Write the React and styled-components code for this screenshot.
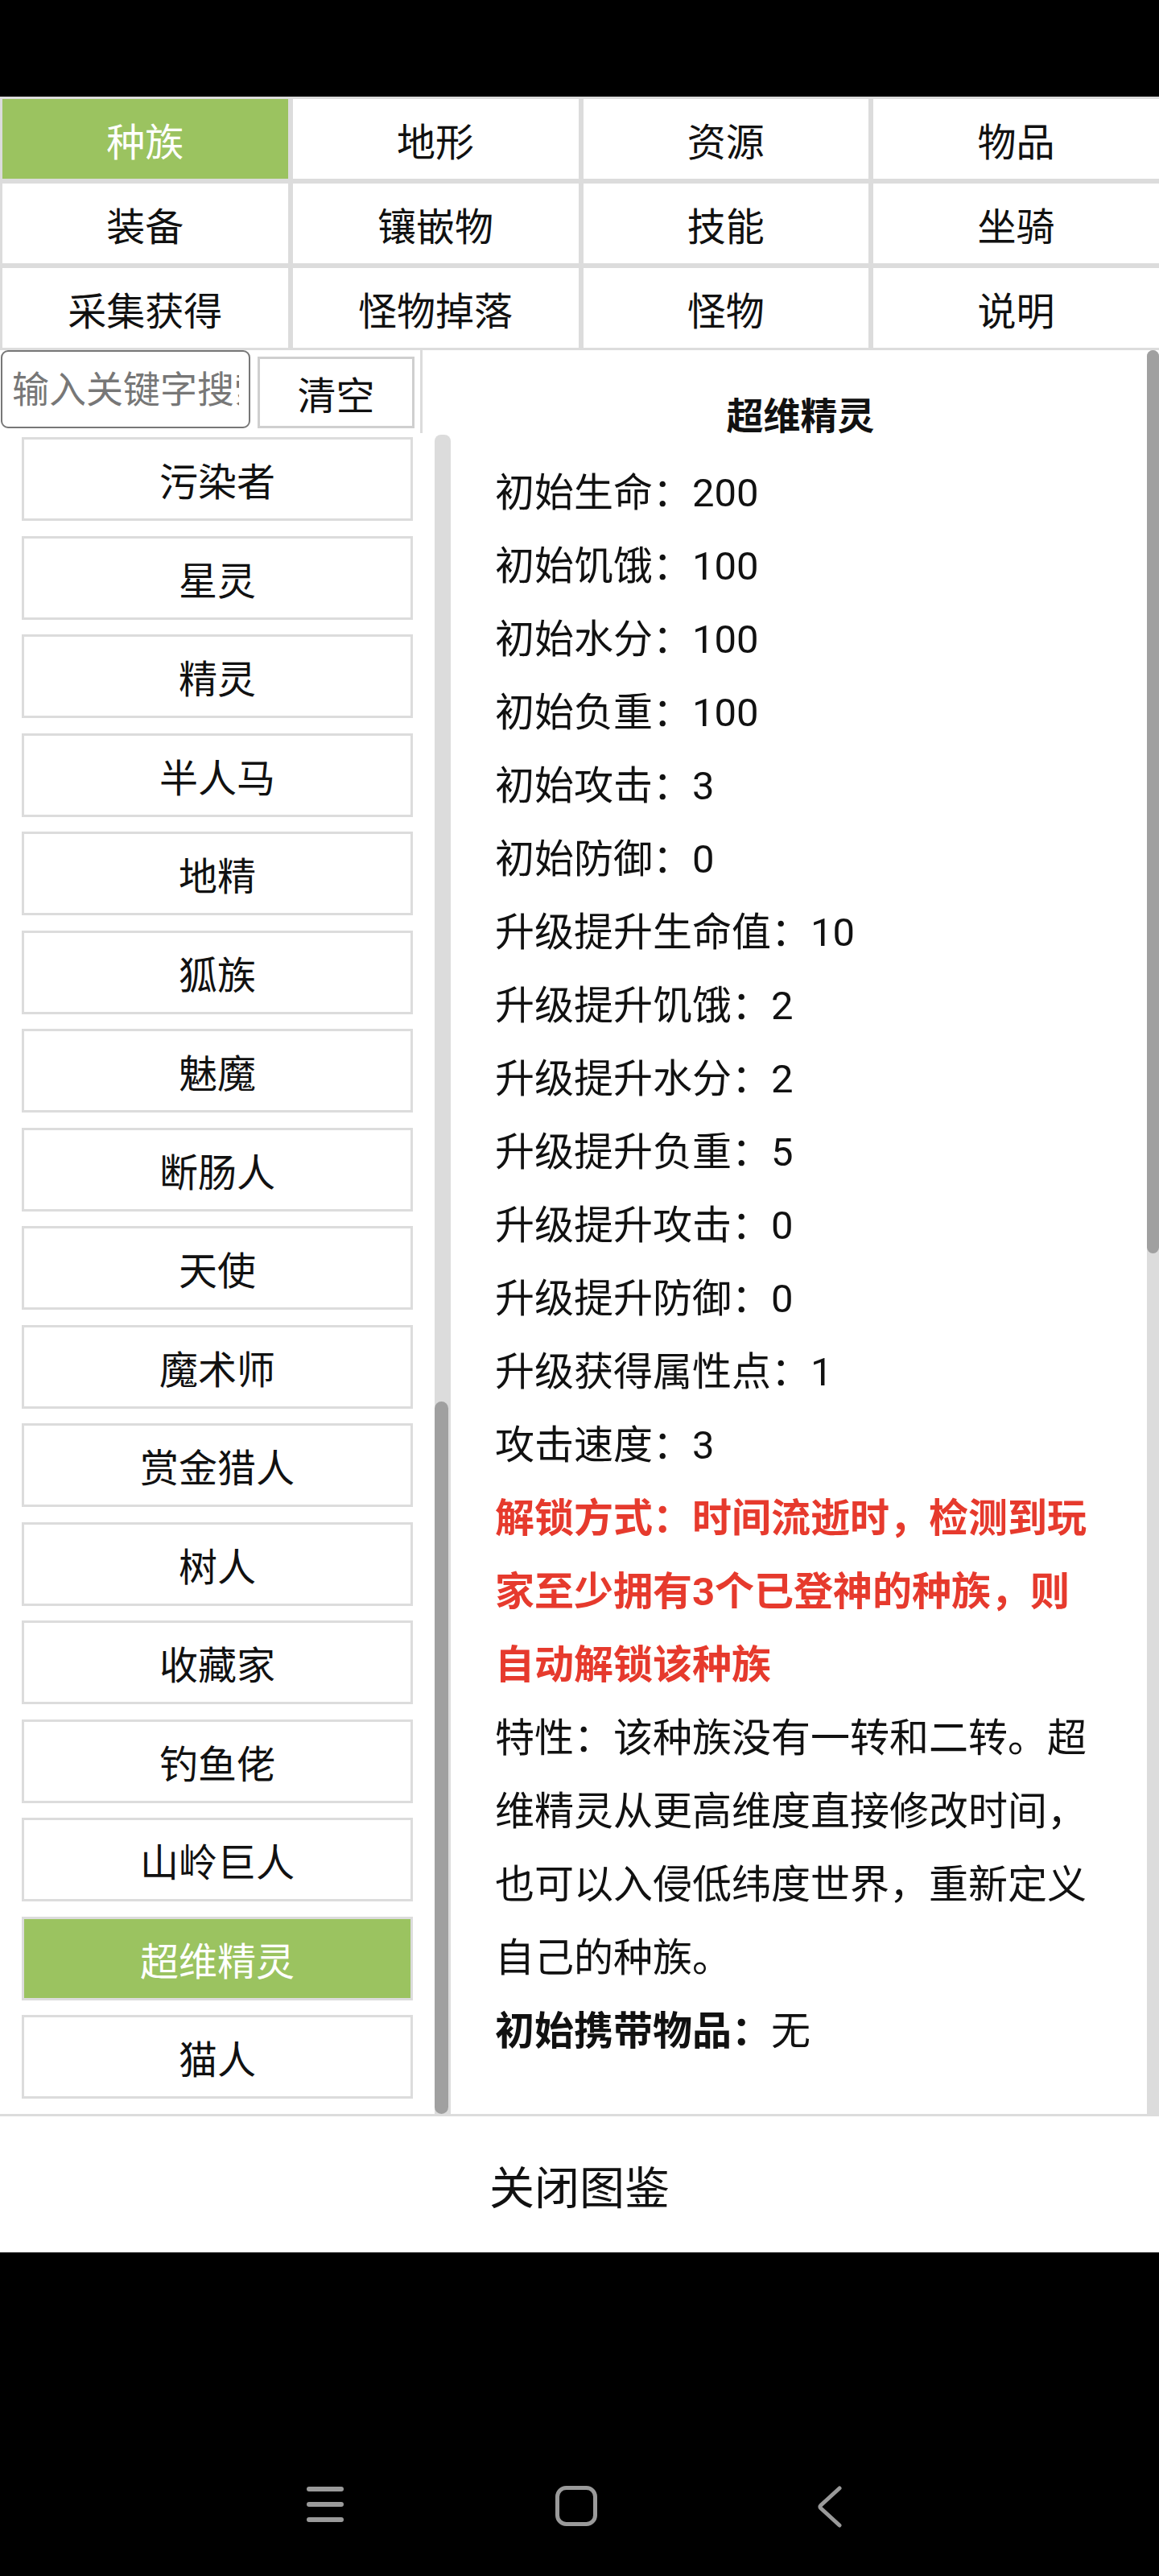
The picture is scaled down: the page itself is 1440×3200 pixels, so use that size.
import React from "react";
import styled, { createGlobalStyle } from "styled-components";

const GREEN = "#9bc360";
const LINE = "#dcdcdc";

const GlobalStyle = createGlobalStyle`
  html, body {
    margin: 0;
    padding: 0;
    background: #000;
  }
  body {
    font-family: Roboto, "Noto Sans CJK SC", sans-serif;
  }
  * {
    box-sizing: border-box;
  }
`;

const tabs = [
  "种族", "地形", "资源", "物品",
  "装备", "镶嵌物", "技能", "坐骑",
  "采集获得", "怪物掉落", "怪物", "说明",
];

const races = [
  "污染者", "星灵", "精灵", "半人马", "地精", "狐族", "魅魔", "断肠人",
  "天使", "魔术师", "赏金猎人", "树人", "收藏家", "钓鱼佬", "山岭巨人",
  "超维精灵", "猫人",
];

const stats = [
  ["初始生命", "200"],
  ["初始饥饿", "100"],
  ["初始水分", "100"],
  ["初始负重", "100"],
  ["初始攻击", "3"],
  ["初始防御", "0"],
  ["升级提升生命值", "10"],
  ["升级提升饥饿", "2"],
  ["升级提升水分", "2"],
  ["升级提升负重", "5"],
  ["升级提升攻击", "0"],
  ["升级提升防御", "0"],
  ["升级获得属性点", "1"],
  ["攻击速度", "3"],
];

const Page = styled.div`
  width: 1440px;
  height: 3200px;
  background: #000;
  display: flex;
  flex-direction: column;
`;

const StatusBar = styled.div`
  height: 120px;
  flex: none;
`;

const Sheet = styled.div`
  background: #fff;
  display: flex;
  flex-direction: column;
`;

const TabGrid = styled.div`
  display: grid;
  grid-template-columns: repeat(4, 1fr);
  grid-auto-rows: 99px;
  gap: 6px;
  padding: 3px 0 3px 3px;
  background: ${LINE};
`;

const Tab = styled.div`
  display: flex;
  align-items: center;
  justify-content: center;
  font-size: 48px;
  color: ${({ $active }) => ($active ? "#fff" : "#111")};
  background: ${({ $active }) => ($active ? GREEN : "#fff")};
`;

const Body = styled.div`
  height: 2191px;
  display: flex;
`;

const LeftCol = styled.div`
  width: 560px;
  display: flex;
  flex-direction: column;
`;

const SearchRow = styled.div`
  width: 525px;
  height: 103px;
  display: flex;
  align-items: flex-end;
  gap: 9px;
  padding: 0 0 6px 1px;
  border-right: 3px solid ${LINE};
`;

const SearchInput = styled.input`
  width: 310px;
  height: 97px;
  border: 2.5px solid #777;
  border-radius: 9px;
  padding: 0 12px;
  font-family: inherit;
  font-size: 46px;
  color: #222;
  outline: none;
  &::placeholder {
    color: #777;
  }
`;

const ClearButton = styled.button`
  width: 195px;
  height: 89px;
  border: 3px solid #cfcfcf;
  background: #fff;
  font-family: inherit;
  font-size: 48px;
  color: #111;
  padding: 0;
`;

const ListArea = styled.div`
  flex: 1;
  display: flex;
  min-height: 0;
`;

const RaceList = styled.div`
  width: 513px;
  padding: 5px 0 0 27px;
  display: flex;
  flex-direction: column;
  gap: 18.5px;
  overflow: hidden;
`;

const RaceItem = styled.div`
  height: 104px;
  flex: none;
  border: 3px solid ${LINE};
  background: ${({ $active }) => ($active ? GREEN : "#fff")};
  color: ${({ $active }) => ($active ? "#fff" : "#111")};
  display: flex;
  align-items: center;
  justify-content: center;
  font-size: 48px;
`;

const Track = styled.div`
  width: ${({ $width }) => $width}px;
  margin-left: ${({ $offset }) => $offset || 0}px;
  margin-top: ${({ $top }) => $top || 0}px;
  flex: none;
  background: ${LINE};
  border-radius: 8px 8px 0 0;
  display: flex;
  flex-direction: column;
`;

const Thumb = styled.div`
  width: ${({ $width }) => $width}px;
  margin-top: ${({ $start }) => $start}px;
  height: ${({ $size }) => $size}px;
  background: #a0a0a0;
  border-radius: 9px;
`;

const RightCol = styled.div`
  flex: 1;
  display: flex;
`;

const Detail = styled.div`
  flex: 1;
  padding: 37px 51px 0 55px;
  font-size: 49px;
  line-height: 91px;
  color: #111;
`;

const Title = styled.h2`
  margin: 0 0 4px;
  text-align: center;
  font-size: 46px;
  line-height: 91px;
  font-weight: 700;
`;

const Line = styled.p`
  margin: 0;
  color: ${({ $red }) => ($red ? "#e63a2d" : "#111")};
  font-weight: ${({ $red }) => ($red ? 700 : 400)};
`;

const Strong = styled.b`
  font-weight: 700;
`;

const Divider = styled.div`
  height: 3px;
  background: ${LINE};
`;

const CloseBar = styled.div`
  height: 169px;
  display: flex;
  align-items: center;
  justify-content: center;
  font-size: 56px;
  color: #111;
`;

const NavBar = styled.div`
  flex: 1;
  display: flex;
  align-items: flex-start;
  padding: 290px 0 0 381px;
`;

const NavIcon = styled.svg`
  display: block;
  margin-left: ${({ $gap }) => $gap || 0}px;
`;

const Scrollbar = ({ width, thumbWidth, start, size, offset, top }) => (
  <Track $width={width} $offset={offset} $top={top}>
    <Thumb $width={thumbWidth} $start={start} $size={size} />
  </Track>
);

export default function App() {
  return (
    <Page>
      <GlobalStyle />
      <StatusBar />
      <Sheet>
        <TabGrid>
          {tabs.map((t, i) => (
            <Tab key={t} $active={i === 0}>
              {t}
            </Tab>
          ))}
        </TabGrid>

        <Body>
          <LeftCol>
            <SearchRow>
              <SearchInput placeholder="输入关键字搜索" />
              <ClearButton>清空</ClearButton>
            </SearchRow>
            <ListArea>
              <RaceList>
                {races.map((r) => (
                  <RaceItem key={r} $active={r === "超维精灵"}>
                    {r}
                  </RaceItem>
                ))}
              </RaceList>
              <Scrollbar
                width={20}
                thumbWidth={17}
                offset={27}
                top={2}
                start={1201}
                size={885}
              />
            </ListArea>
          </LeftCol>

          <RightCol>
            <Detail>
              <Title>超维精灵</Title>
              {stats.map(([k, v]) => (
                <Line key={k}>
                  {k}：{v}
                </Line>
              ))}
              <Line $red>
                解锁方式：时间流逝时，检测到玩家至少拥有3个已登神的种族，则自动解锁该种族
              </Line>
              <Line>
                特性：该种族没有一转和二转。超维精灵从更高维度直接修改时间，也可以入侵低纬度世界，重新定义自己的种族。
              </Line>
              <Line>
                <Strong>初始携带物品：</Strong>无
              </Line>
            </Detail>
            <Scrollbar width={15} thumbWidth={15} start={0} size={1122} />
          </RightCol>
        </Body>

        <Divider />
        <CloseBar>关闭图鉴</CloseBar>
      </Sheet>

      <NavBar>
        <NavIcon width="46" height="46" viewBox="0 0 46 46">
          <rect x="0" y="1" width="46" height="6" rx="3" fill="#9a9a9a" />
          <rect x="0" y="20" width="46" height="6" rx="3" fill="#9a9a9a" />
          <rect x="0" y="39" width="46" height="6" rx="3" fill="#9a9a9a" />
        </NavIcon>
        <NavIcon $gap={263} width="52" height="50" viewBox="0 0 52 50">
          <rect
            x="2.5"
            y="2.5"
            width="47"
            height="45"
            rx="11"
            fill="none"
            stroke="#9a9a9a"
            strokeWidth="5"
          />
        </NavIcon>
        <NavIcon $gap={271} width="34" height="52" viewBox="0 0 34 52">
          <path
            d="M30 3 L7 24 Q5 26 7 28 L30 49"
            fill="none"
            stroke="#9a9a9a"
            strokeWidth="5"
            strokeLinecap="round"
            strokeLinejoin="round"
          />
        </NavIcon>
      </NavBar>
    </Page>
  );
}
